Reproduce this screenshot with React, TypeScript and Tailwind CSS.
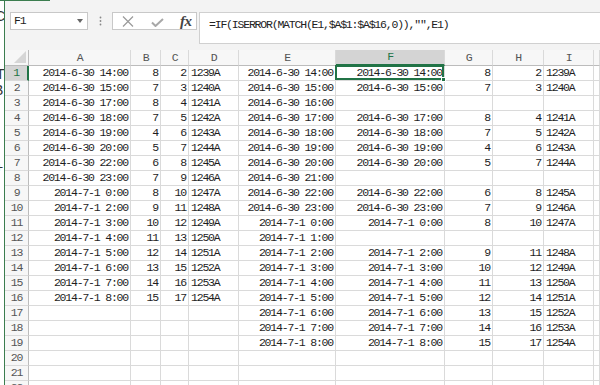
import React from "react";

type Row = { a: string; b: string; c: string; d: string; e: string; f: string; g: string; h: string; i: string };

const left: [string, string, string, string][] = [
  ["2014-6-30 14:00", "8", "2", "1239A"],
  ["2014-6-30 15:00", "7", "3", "1240A"],
  ["2014-6-30 17:00", "8", "4", "1241A"],
  ["2014-6-30 18:00", "7", "5", "1242A"],
  ["2014-6-30 19:00", "4", "6", "1243A"],
  ["2014-6-30 20:00", "5", "7", "1244A"],
  ["2014-6-30 22:00", "6", "8", "1245A"],
  ["2014-6-30 23:00", "7", "9", "1246A"],
  ["2014-7-1 0:00", "8", "10", "1247A"],
  ["2014-7-1 2:00", "9", "11", "1248A"],
  ["2014-7-1 3:00", "10", "12", "1249A"],
  ["2014-7-1 4:00", "11", "13", "1250A"],
  ["2014-7-1 5:00", "12", "14", "1251A"],
  ["2014-7-1 6:00", "13", "15", "1252A"],
  ["2014-7-1 7:00", "14", "16", "1253A"],
  ["2014-7-1 8:00", "15", "17", "1254A"],
];

const eCol = [
  "2014-6-30 14:00",
  "2014-6-30 15:00",
  "2014-6-30 16:00",
  "2014-6-30 17:00",
  "2014-6-30 18:00",
  "2014-6-30 19:00",
  "2014-6-30 20:00",
  "2014-6-30 21:00",
  "2014-6-30 22:00",
  "2014-6-30 23:00",
  "2014-7-1 0:00",
  "2014-7-1 1:00",
  "2014-7-1 2:00",
  "2014-7-1 3:00",
  "2014-7-1 4:00",
  "2014-7-1 5:00",
  "2014-7-1 6:00",
  "2014-7-1 7:00",
  "2014-7-1 8:00",
];

const right: ([string, string, string, string] | null)[] = [
  ["2014-6-30 14:00", "8", "2", "1239A"],
  ["2014-6-30 15:00", "7", "3", "1240A"],
  null,
  ["2014-6-30 17:00", "8", "4", "1241A"],
  ["2014-6-30 18:00", "7", "5", "1242A"],
  ["2014-6-30 19:00", "4", "6", "1243A"],
  ["2014-6-30 20:00", "5", "7", "1244A"],
  null,
  ["2014-6-30 22:00", "6", "8", "1245A"],
  ["2014-6-30 23:00", "7", "9", "1246A"],
  ["2014-7-1 0:00", "8", "10", "1247A"],
  null,
  ["2014-7-1 2:00", "9", "11", "1248A"],
  ["2014-7-1 3:00", "10", "12", "1249A"],
  ["2014-7-1 4:00", "11", "13", "1250A"],
  ["2014-7-1 5:00", "12", "14", "1251A"],
  ["2014-7-1 6:00", "13", "15", "1252A"],
  ["2014-7-1 7:00", "14", "16", "1253A"],
  ["2014-7-1 8:00", "15", "17", "1254A"],
];

const rows: Row[] = Array.from({ length: 22 }, (_, k) => {
  const l = left[k];
  const r = right[k];
  return {
    a: l ? l[0] : "",
    b: l ? l[1] : "",
    c: l ? l[2] : "",
    d: l ? l[3] : "",
    e: eCol[k] ?? "",
    f: r ? r[0] : "",
    g: r ? r[1] : "",
    h: r ? r[2] : "",
    i: r ? r[3] : "",
  };
});

const cellR = "h-[15px] border-r border-b border-[#dadada] flex items-center justify-end pr-[2px] whitespace-nowrap";
const cellL = "h-[15px] border-r border-b border-[#dadada] flex items-center justify-start pl-[2px] whitespace-nowrap";
const colHead = "h-[16px] border-r border-b border-r-[#dadada] border-b-[#bcbcbc] bg-[#f7f7f7] flex items-center justify-center text-[#555]";

export default function App() {
  const cols = ["A", "B", "C", "D", "E", "F", "G", "H", "I", ""];
  return (
    <div className="relative flex w-[600px] h-[385px] overflow-hidden bg-[#f3f3f3] text-[11.5px] tracking-[-1.2px] text-[#1e1e1e] font-['Liberation_Mono',monospace]">
      {/* window edge on the left */}
      <div className="relative shrink-0 w-[4px] h-full bg-white overflow-hidden text-[#333] text-[14px] font-['Liberation_Sans',sans-serif] tracking-normal">
        <span className="absolute left-[-5px] top-[6px]">C</span>
        <span className="absolute left-[-4px] top-[64px]">T</span>
        <span className="absolute left-[-6px] top-[80px]">B</span>
        <span className="absolute left-[-5px] top-[157px]">+</span>
      </div>
      <div className="shrink-0 w-[1px] h-full bg-[#3b7d4f]" />
      <div className="absolute left-0 top-0 w-[50px] h-[1px] bg-[#3b7d4f]" />

      <div className="flex flex-col flex-1 min-w-0">
        {/* formula bar */}
        <div className="shrink-0 h-[50px] flex items-start pt-[12px]">
          <div className="ml-[5px] w-[78px] h-[18px] border border-[#c8c8c8] bg-white flex items-center justify-between pl-[3px] pr-[4px]">
            <span>F1</span>
            <svg width="6" height="4" viewBox="0 0 6 4"><path d="M0 0h6L3 4z" fill="#666" /></svg>
          </div>
          <div className="w-[24px] h-[18px] flex items-center justify-center">
            <svg width="3" height="10" viewBox="0 0 3 10">
              <circle cx="1.5" cy="1.5" r="0.9" fill="#888" />
              <circle cx="1.5" cy="5" r="0.9" fill="#888" />
              <circle cx="1.5" cy="8.5" r="0.9" fill="#888" />
            </svg>
          </div>
          <div className="w-[85px] h-[18px] border border-[#c8c8c8] bg-white flex items-center">
            <svg className="ml-[9px]" width="12" height="11" viewBox="0 0 12 11">
              <path d="M1 0.5L11 10.5M11 0.5L1 10.5" stroke="#9a9a9a" strokeWidth="1.2" fill="none" />
            </svg>
            <svg className="ml-[17px] mt-[3px]" width="13" height="9" viewBox="0 0 13 9">
              <path d="M1 4.5L4.5 8L12 1" stroke="#a8a8a8" strokeWidth="2" fill="none" />
            </svg>
            <span className="ml-[16px] text-[15px] italic font-bold text-[#444] tracking-[-0.5px] font-['Liberation_Serif',serif] leading-none">fx</span>
          </div>
          <div className="ml-[2px] flex-1 h-[32px] border border-r-0 border-[#d0d0d0] bg-white pl-[9px] pt-[3px] whitespace-nowrap text-[#222]">
            =IF(ISERROR(MATCH(E1,$A$1:$A$16,0)),"",E1)
          </div>
        </div>

        {/* grid */}
        <div className="shrink-0 grid bg-white grid-cols-[24px_102px_30px_28px_50px_97px_109px_48px_51px_50px_1fr]">
          <div className="h-[16px] border-r border-b border-[#bcbcbc] bg-[#f7f7f7] flex items-end justify-end pr-[2px] pb-[2px]">
            <svg width="12" height="12" viewBox="0 0 12 12"><path d="M12 0V12H0z" fill="#d6d6d6" /></svg>
          </div>
          {cols.map((c, idx) =>
            c === "F" ? (
              <div key={idx} className="h-[16px] border-r border-r-[#dadada] border-b-2 border-b-[#217346] bg-[#d4d4d4] flex items-center justify-center text-[#217346]">
                {c}
              </div>
            ) : (
              <div key={idx} className={colHead}>{c}</div>
            )
          )}
          {rows.map((r, k) => (
            <React.Fragment key={k}>
              {k === 0 ? (
                <div className="h-[15px] border-r-2 border-r-[#217346] border-b border-b-[#dadada] bg-[#d4d4d4] flex items-center justify-center text-[#217346]">
                  {k + 1}
                </div>
              ) : (
                <div className="h-[15px] border-r border-b border-r-[#bcbcbc] border-b-[#dadada] bg-[#f7f7f7] flex items-center justify-center text-[#555]">
                  {k + 1}
                </div>
              )}
              <div className={cellR}>{r.a}</div>
              <div className={cellR}>{r.b}</div>
              <div className={cellR}>{r.c}</div>
              <div className={cellL}>{r.d}</div>
              <div className={cellR}>{r.e}</div>
              {k === 0 ? (
                <div className={cellR + " relative"}>
                  {r.f}
                  <div className="absolute left-[-1px] top-[-1px] right-[0px] bottom-[0px] border-2 border-[#217346]" />
                  <div className="absolute right-[-2px] bottom-[-2px] w-[5px] h-[5px] bg-[#217346] border border-white" />
                </div>
              ) : (
                <div className={cellR}>{r.f}</div>
              )}
              <div className={cellR}>{r.g}</div>
              <div className={cellR}>{r.h}</div>
              <div className={cellL}>{r.i}</div>
              <div className={cellL}></div>
            </React.Fragment>
          ))}
        </div>
      </div>
    </div>
  );
}
